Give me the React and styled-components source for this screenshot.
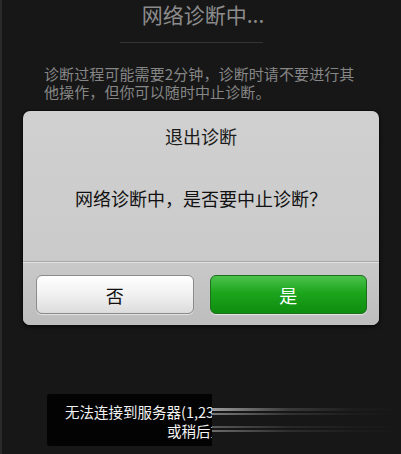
import React from "react";
import styled, { createGlobalStyle } from "styled-components";

const GlobalStyle = createGlobalStyle`
  html, body {
    margin: 0;
    padding: 0;
    background: #171717;
  }
  body {
    font-family: "Noto Sans CJK SC", "Noto Sans", sans-serif;
  }
`;

const Screen = styled.div`
  width: 401px;
  height: 454px;
  overflow: hidden;
  background: #171717;
  border-left: 2px solid #2a2a2a;
  box-sizing: border-box;
  display: flex;
  flex-direction: column;
`;

const Heading = styled.div`
  text-align: center;
  font-size: 21px;
  line-height: 28px;
  color: #8c8c8c;
  padding-left: 3px;
`;

const Rule = styled.div`
  width: 143px;
  height: 1px;
  margin: 14px 0 0 118px;
  background: #333333;
`;

const Hint = styled.p`
  margin: 22px 40px 0 42px;
  font-size: 15px;
  line-height: 18px;
  color: #868686;
  letter-spacing: 0.1px;
`;

const Dialog = styled.div`
  margin: 10px 0 0 21px;
  width: 356px;
  height: 214px;
  border-radius: 7px;
  background: linear-gradient(#d0d0d0, #c8c8c8);
  box-shadow: 0 0 0 1px #0c0c0c, 0 2px 4px rgba(0, 0, 0, 0.7);
  display: flex;
  flex-direction: column;
  overflow: hidden;
`;

const DialogTitle = styled.div`
  text-align: center;
  font-size: 18px;
  line-height: 24px;
  padding-top: 13px;
  color: #1a1a1a;
`;

const DialogMessage = styled.div`
  text-align: center;
  font-size: 18px;
  line-height: 24px;
  margin-top: 38px;
  color: #111111;
`;

const Footer = styled.div`
  margin-top: auto;
  height: 64px;
  border-top: 1px solid #a9a9a9;
  box-shadow: inset 0 1px 0 #e2e2e2;
  background: linear-gradient(#c9c9c9, #bdbdbd);
  display: flex;
  gap: 16px;
  padding: 13px 12px 0 13px;
  box-sizing: border-box;
`;

const Button = styled.button`
  flex: 1;
  height: 39px;
  border-radius: 6px;
  font-family: inherit;
  font-size: 18px;
  border: 1px solid ${p => (p.primary ? "#1d6e1d" : "#8a8a8a")};
  color: ${p => (p.primary ? "#ffffff" : "#111111")};
  background: ${p =>
    p.primary
      ? "linear-gradient(#4cc24c, #1da51d 45%, #0e8d0e)"
      : "linear-gradient(#ffffff, #f1f1f1 50%, #dcdcdc)"};
  box-shadow: 0 1px 1px rgba(255, 255, 255, 0.6);
  padding: 0;
`;

const ToastRow = styled.div`
  margin: 69px 0 0 45px;
  display: flex;
  align-items: stretch;
`;

const Toast = styled.div`
  width: 165px;
  height: 52px;
  background: #030303;
  border-radius: 3px 0 0 3px;
  color: #f2f2f2;
  font-size: 14.5px;
  line-height: 19px;
  padding: 8px 0 0 18px;
  box-sizing: border-box;
  white-space: nowrap;
  overflow: hidden;
`;

const SecondLine = styled.div`
  padding-left: 102px;
`;

const Streaks = styled.div`
  flex: 1;
  display: flex;
  flex-direction: column;
  padding-top: 14px;
  gap: 2px;
`;

const Streak = styled.div`
  height: ${p => p.h}px;
  margin-top: ${p => p.gap || 0}px;
  background: linear-gradient(
    to right,
    rgba(190, 190, 190, ${p => p.strength}),
    rgba(120, 120, 120, ${p => p.strength * 0.45}) 40%,
    rgba(60, 60, 60, 0.15) 75%,
    rgba(40, 40, 40, 0)
  );
`;

export default function App() {
  return (
    <>
      <GlobalStyle />
      <Screen>
        <Heading>网络诊断中...</Heading>
        <Rule />
        <Hint>
          诊断过程可能需要2分钟，诊断时请不要进行其他操作，但你可以随时中止诊断。
        </Hint>
        <Dialog>
          <DialogTitle>退出诊断</DialogTitle>
          <DialogMessage>网络诊断中，是否要中止诊断？</DialogMessage>
          <Footer>
            <Button>否</Button>
            <Button primary>是</Button>
          </Footer>
        </Dialog>
        <ToastRow>
          <Toast>
            无法连接到服务器(1,23
            <SecondLine>或稍后重</SecondLine>
          </Toast>
          <Streaks>
            <Streak h={3} strength={0.8} />
            <Streak h={2} strength={0.6} />
            <Streak h={2} strength={0.4} gap={9} />
            <Streak h={2} strength={0.5} />
          </Streaks>
        </ToastRow>
      </Screen>
    </>
  );
}
